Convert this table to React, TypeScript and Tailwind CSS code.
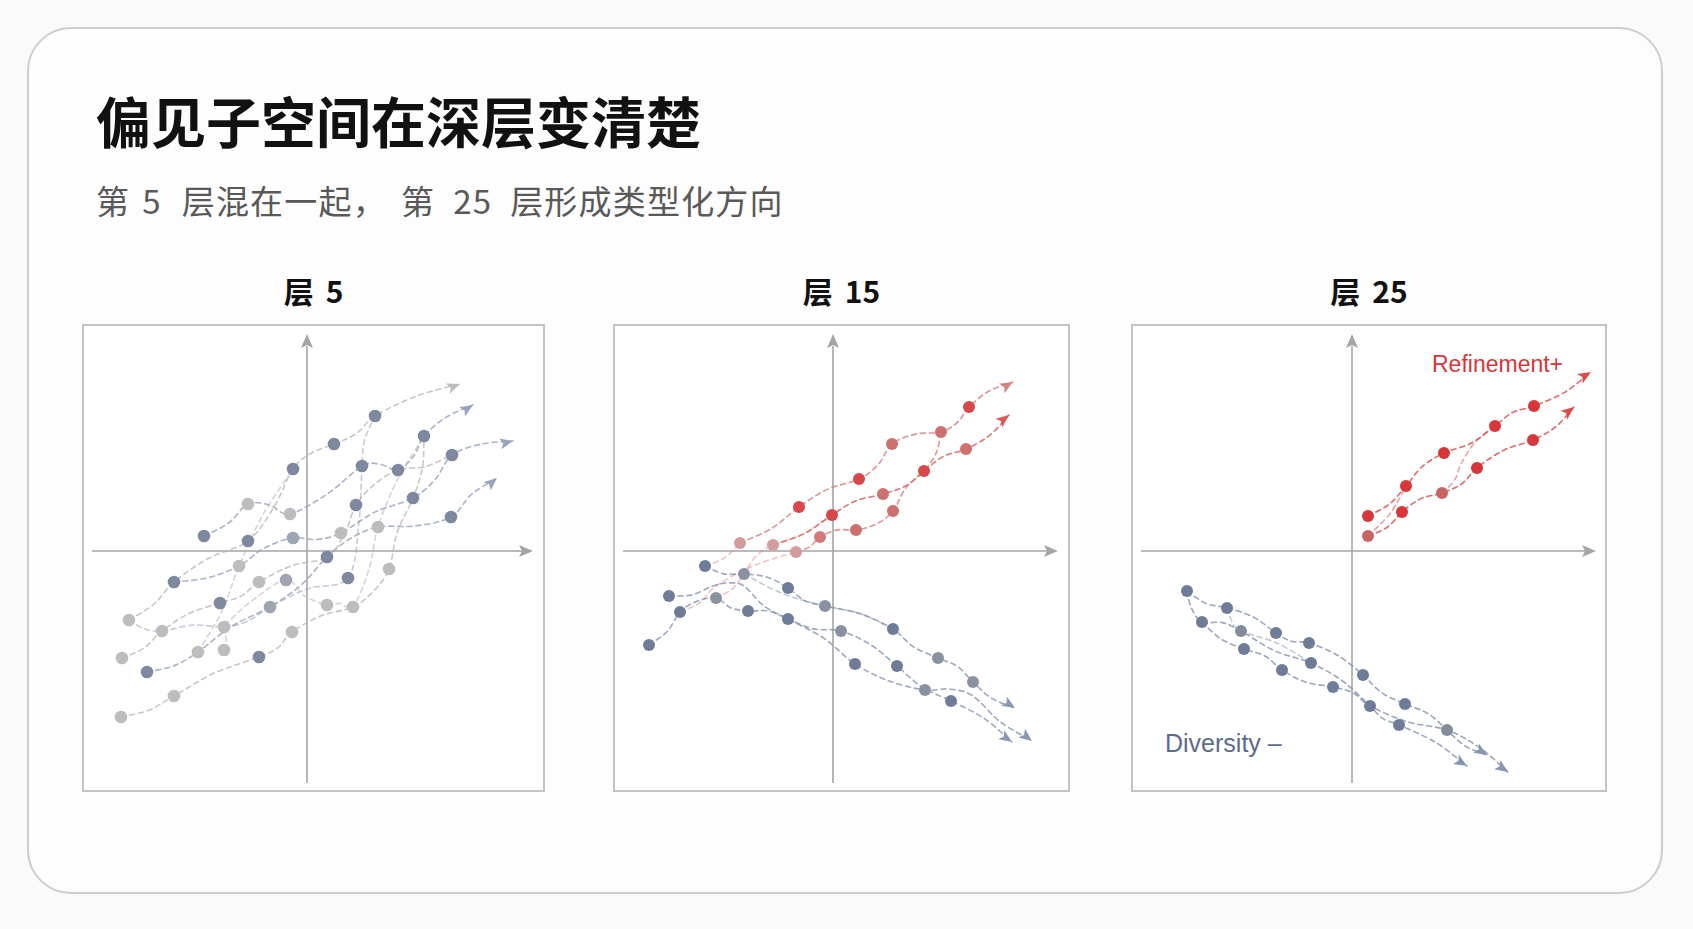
type P = [number, number];
type Dot = [number, number, string];
type Traj = { pts: P[]; c: string; arrow?: boolean; o?: number };

// catmull-rom through the points, with a small wobble between them
function wavy(pts: P[]): P[] {
  const out: P[] = [];
  for (let i = 0; i < pts.length - 1; i++) {
    const [x1, y1] = pts[i];
    const [x2, y2] = pts[i + 1];
    const dx = x2 - x1;
    const dy = y2 - y1;
    const len = Math.hypot(dx, dy) || 1;
    const s = (i % 2 === 0 ? 1 : -1) * Math.min(4, len / 10);
    out.push(pts[i]);
    out.push([x1 + dx / 2 - (dy / len) * s, y1 + dy / 2 + (dx / len) * s]);
  }
  out.push(pts[pts.length - 1]);
  return out;
}

function smooth(raw: P[]) {
  const pts = wavy(raw);
  let d = `M${pts[0][0]},${pts[0][1]}`;
  for (let i = 0; i < pts.length - 1; i++) {
    const p0 = pts[i - 1] || pts[i];
    const p1 = pts[i];
    const p2 = pts[i + 1];
    const p3 = pts[i + 2] || p2;
    const c1x = p1[0] + (p2[0] - p0[0]) / 6;
    const c1y = p1[1] + (p2[1] - p0[1]) / 6;
    const c2x = p2[0] - (p3[0] - p1[0]) / 6;
    const c2y = p2[1] - (p3[1] - p1[1]) / 6;
    d += ` C${c1x.toFixed(1)},${c1y.toFixed(1)} ${c2x.toFixed(1)},${c2y.toFixed(1)} ${p2[0]},${p2[1]}`;
  }
  return d;
}

function head(tip: P, from: P, len = 13, half = 5.5) {
  const dx = tip[0] - from[0];
  const dy = tip[1] - from[1];
  const l = Math.hypot(dx, dy) || 1;
  const ux = dx / l;
  const uy = dy / l;
  const bx = tip[0] - ux * len;
  const by = tip[1] - uy * len;
  return `${tip[0]},${tip[1]} ${bx - uy * half},${by + ux * half} ${bx + ux * 3},${by + uy * 3} ${bx + uy * half},${by - ux * half}`;
}

const AXIS = "#a5a5a5";

function Chart({
  w,
  h,
  ax,
  ay,
  xEnd,
  dots,
  trajs,
  r = 6,
  children,
}: {
  w: number;
  h: number;
  ax: number;
  ay: number;
  xEnd: number;
  dots: Dot[];
  trajs: Traj[];
  r?: number;
  children?: React.ReactNode;
}) {
  return (
    <div className="border-2 border-[#c3c3c3] bg-white" style={{ width: w, height: h }}>
      <svg width={w - 4} height={h - 4} viewBox={`2 2 ${w - 4} ${h - 4}`} className="block">
        <line x1={ax} y1={459} x2={ax} y2={22} stroke={AXIS} strokeWidth={1.6} />
        <polygon points={head([ax, 10], [ax, 40], 14, 6)} fill={AXIS} />
        <line x1={10} y1={ay} x2={xEnd - 10} y2={ay} stroke={AXIS} strokeWidth={1.6} />
        <polygon points={head([xEnd, ay], [xEnd - 40, ay], 14, 6)} fill={AXIS} />
        {trajs.map((t, i) => (
          <path
            key={i}
            d={smooth(t.pts)}
            fill="none"
            stroke={t.c}
            strokeWidth={1.6}
            strokeDasharray="5 4"
            strokeLinecap="round"
            opacity={t.o ?? 0.8}
          />
        ))}
        {trajs
          .filter((t) => t.arrow)
          .map((t, i) => (
            <polygon
              key={i}
              points={head(t.pts[t.pts.length - 1], t.pts[t.pts.length - 2])}
              fill={t.c}
              opacity={0.95}
            />
          ))}
        {dots.map(([x, y, c], i) => (
          <circle key={i} cx={x} cy={y} r={r} fill={c} />
        ))}
        {children}
      </svg>
    </div>
  );
}

const B1 = "#7e89a0";
const G1 = "#bdbdbd";
const M1 = "#a0a6b1";

const dots1: Dot[] = [
  [293, 92, B1], [252, 120, B1], [342, 112, B1], [370, 131, B1], [211, 145, B1], [280, 142, B1],
  [316, 146, B1], [166, 180, G1], [208, 190, G1], [331, 174, B1], [274, 181, B1], [369, 193, B1],
  [122, 212, B1], [166, 217, B1], [211, 214, M1], [259, 209, G1], [296, 203, G1], [245, 233, B1],
  [157, 242, G1], [307, 245, G1], [92, 258, B1], [177, 258, G1], [204, 256, M1], [266, 254, B1],
  [138, 279, B1], [188, 283, M1], [245, 281, G1], [271, 283, G1], [47, 296, G1], [80, 307, G1],
  [142, 303, G1], [210, 308, G1], [40, 334, G1], [116, 328, G1], [142, 326, G1], [177, 333, B1],
  [65, 348, B1], [92, 372, G1], [39, 393, G1],
];

const LG = "#b9b9b9";
const LB = "#93a0bb";
const trajs1: Traj[] = [
  { pts: [[47, 296], [92, 258], [166, 217], [211, 145], [252, 120], [293, 92], [378, 60]], c: LG, arrow: true },
  { pts: [[122, 212], [166, 180], [208, 190], [280, 142], [316, 146], [342, 112], [391, 81]], c: LB, arrow: true },
  { pts: [[92, 258], [157, 242], [210, 214], [259, 209], [331, 174], [370, 131], [431, 117]], c: LB, arrow: true },
  { pts: [[65, 348], [116, 328], [188, 283], [245, 233], [296, 203], [369, 193], [415, 154]], c: LB, arrow: true },
  { pts: [[39, 393], [92, 372], [177, 333], [210, 308], [271, 283], [307, 245], [331, 174], [342, 112]], c: LG },
  { pts: [[40, 334], [80, 307], [138, 279], [177, 258], [245, 233], [274, 181], [316, 146], [370, 131]], c: LG },
  { pts: [[142, 326], [142, 303], [204, 256], [245, 281], [271, 283], [296, 203], [342, 112]], c: LG, o: 0.6 },
  { pts: [[47, 296], [80, 307], [142, 303], [188, 283], [266, 254], [280, 142], [293, 92]], c: LB, o: 0.55 },
  { pts: [[116, 328], [157, 242], [211, 145]], c: LG, o: 0.6 },
];

const Rb = "#d8474a";
const Rm = "#cd7070";
const Rf = "#d39c9c";
const Bb = "#6e7c98";
const Bg = "#8b929f";

const dots2: Dot[] = [
  [356, 83, Rb], [328, 108, Rm], [279, 120, Rm], [353, 125, Rm], [246, 155, Rb], [311, 147, Rb],
  [270, 170, Rm], [186, 183, Rb], [219, 191, Rb], [280, 187, Rm], [243, 206, Rm], [207, 213, "#d47878"],
  [127, 219, Rf], [160, 221, Rf], [183, 228, Rf],
  [92, 242, Bb], [131, 250, Bg], [56, 272, Bb], [103, 274, Bg], [175, 264, Bb], [67, 288, Bb],
  [135, 287, Bb], [212, 282, Bg], [175, 295, Bb], [228, 307, Bg], [280, 305, Bb], [36, 321, Bb],
  [242, 340, Bb], [284, 342, Bb], [325, 334, Bg], [360, 358, Bg], [312, 366, Bg], [338, 377, Bb],
];

const LR = "#e07a7a";
const LBB = "#8594b0";
const trajs2: Traj[] = [
  { pts: [[127, 219], [186, 183], [246, 155], [279, 120], [328, 108], [356, 83], [400, 58]], c: "#d47c7c", arrow: true },
  { pts: [[160, 221], [219, 191], [270, 170], [311, 147], [353, 125], [396, 91]], c: "#dc5050", arrow: true },
  { pts: [[183, 228], [207, 213], [243, 206], [280, 187], [311, 147], [328, 108]], c: LR },
  { pts: [[103, 274], [131, 250], [160, 221], [219, 191]], c: LR, o: 0.45 },
  { pts: [[67, 288], [103, 262], [183, 228]], c: LR, o: 0.45 },
  { pts: [[92, 242], [127, 219]], c: LR, o: 0.45 },
  { pts: [[92, 242], [131, 250], [175, 264], [212, 282], [280, 305], [325, 334], [360, 358], [402, 384]], c: LBB, arrow: true },
  { pts: [[36, 321], [67, 288], [103, 274], [135, 287], [175, 295], [228, 307], [284, 342], [338, 377], [399, 418]], c: LBB, arrow: true },
  { pts: [[56, 272], [100, 262], [131, 262], [175, 295], [242, 340], [312, 366], [360, 372], [419, 417]], c: LBB, arrow: true },
  { pts: [[131, 250], [212, 282], [280, 305]], c: LBB, o: 0.5 },
];

const R3 = "#d8363a";
const R3m = "#c86464";
const B3 = "#6e7c98";
const B3g = "#858c99";

const dots3: Dot[] = [
  [403, 82, R3], [364, 102, R3], [402, 116, R3], [313, 129, R3], [346, 144, R3], [275, 162, R3],
  [311, 169, R3m], [271, 188, R3], [237, 192, R3], [237, 212, R3m],
  [56, 267, B3], [96, 284, B3], [71, 298, B3], [110, 307, B3g], [145, 309, B3], [178, 319, B3],
  [113, 325, B3], [180, 339, B3], [151, 346, B3], [232, 351, B3], [202, 363, B3], [274, 380, B3],
  [239, 382, B3], [268, 401, B3], [316, 406, B3g],
];

const LR3 = "#dc4545";
const LB3 = "#8190ad";
const trajs3: Traj[] = [
  { pts: [[237, 192], [275, 162], [313, 129], [364, 102], [403, 82], [460, 48]], c: LR3, arrow: true },
  { pts: [[237, 212], [271, 188], [311, 169], [346, 144], [402, 116], [443, 83]], c: LR3, arrow: true },
  { pts: [[237, 212], [275, 162]], c: LR3, o: 0.5 },
  { pts: [[311, 169], [330, 140], [364, 102]], c: LR3, o: 0.5 },
  { pts: [[56, 267], [96, 284], [145, 309], [178, 319], [232, 351], [274, 380], [316, 406], [356, 431]], c: LB3, arrow: true },
  { pts: [[56, 267], [71, 298], [110, 307], [180, 339], [239, 382], [268, 401], [336, 442]], c: LB3, arrow: true },
  { pts: [[71, 298], [113, 325], [151, 346], [202, 363], [239, 382], [316, 406], [377, 448]], c: LB3, arrow: true },
  { pts: [[96, 284], [110, 307], [180, 339]], c: LB3, o: 0.5 },
];

function Column({
  layer,
  className,
  children,
}: {
  layer: string;
  className?: string;
  children: React.ReactNode;
}) {
  return (
    <div className={`flex flex-col items-center ${className ?? ""}`}>
      <div className="text-[30px] leading-none font-semibold text-[#111] mb-[19px]">
        层<span className="ml-[12px]">{layer}</span>
      </div>
      {children}
    </div>
  );
}

export default function App() {
  return (
    <div className="min-h-screen w-full bg-[#fafafa] p-[27px] font-['Noto_Sans_CJK_SC','Noto_Sans',sans-serif]">
      <div className="w-[1636px] h-[867px] rounded-[44px] border-2 border-[#cdcdcd] bg-[#fdfdfd] pt-[63px]">
        <div className="pl-[67px]">
          <h1 className="text-[55px] leading-none font-bold text-[#111]">偏见子空间在深层变清楚</h1>
          <p className="mt-[37px] text-[33px] leading-none tracking-[1.2px] text-[#595959]">
            第<span className="ml-[12px] mr-[20px]">5</span>层混在一起，
            <span className="ml-[14px]">第</span>
            <span className="mx-[18px]">25</span>层形成类型化方向
          </p>
        </div>
        <div className="mt-[58px] ml-[53px] flex">
          <Column layer="5" className="w-[463px]">
            <Chart w={463} h={468} ax={225} ay={227} xEnd={451} dots={dots1} trajs={trajs1} r={6.3} />
          </Column>
          <Column layer="15" className="ml-[68px] w-[457px]">
            <Chart w={457} h={468} ax={220} ay={227} xEnd={445} dots={dots2} trajs={trajs2} />
          </Column>
          <Column layer="25" className="ml-[61px] w-[476px]">
            <Chart w={476} h={468} ax={221} ay={227} xEnd={465} dots={dots3} trajs={trajs3}>
              <text x={301} y={48} fontSize={23} fill="#d8363a" fontFamily="Liberation Sans, Arial, sans-serif">
                Refinement+
              </text>
              <text x={34} y={428} fontSize={25} fill="#5d6b8b" fontFamily="Liberation Sans, Arial, sans-serif">
                Diversity –
              </text>
            </Chart>
          </Column>
        </div>
      </div>
    </div>
  );
}
